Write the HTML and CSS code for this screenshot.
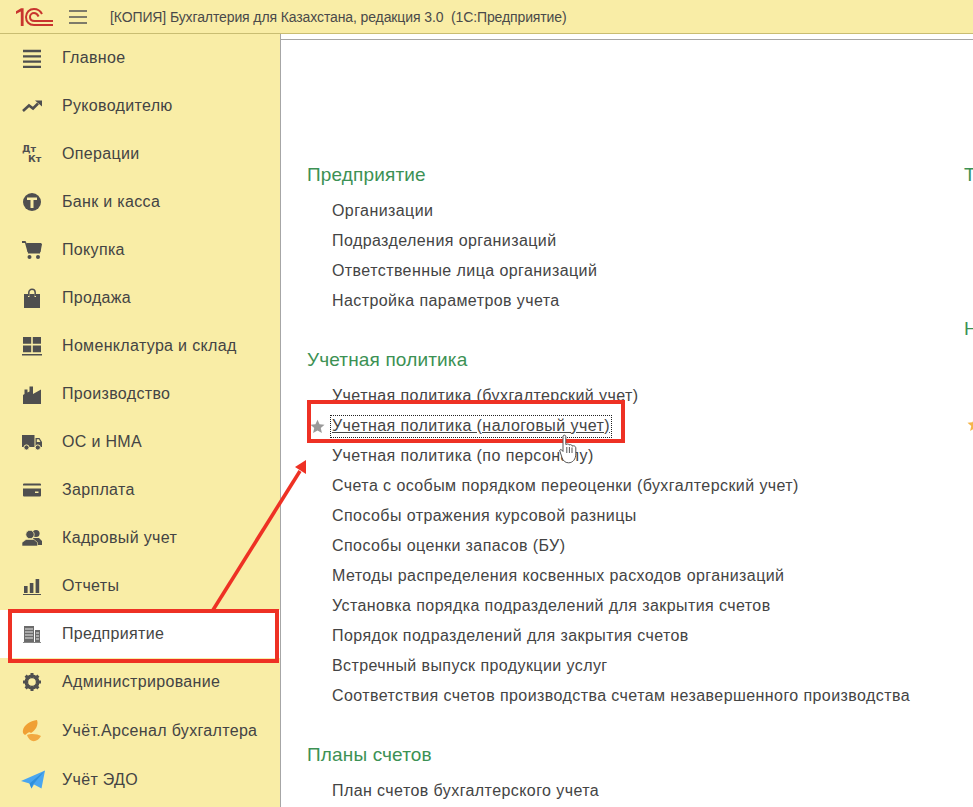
FILE: index.html
```html
<!DOCTYPE html>
<html lang="ru">
<head>
<meta charset="utf-8">
<title>Бухгалтерия для Казахстана</title>
<link rel="stylesheet" href="styles.css">
</head>
<body>
<div class="app">
  <header class="topbar">
    <svg class="logo" viewBox="0 0 37 18" width="37" height="18">
      <path d="M0 3.2L5 .2H7.6V18H4.8V3.6L0 6Z" fill="#c8342e"/>
      <path d="M37 17H18C13 17 10 13.5 10 9C10 4.2 13.5 1 18 1C22 1 24.5 3.2 26 6" fill="none" stroke="#c8342e" stroke-width="2"/>
      <path d="M37 13H18.5C15.5 13 14 11.2 14 9C14 6.6 15.8 5 18 5C20.5 5 21.6 6.4 22.6 8.5" fill="none" stroke="#c8342e" stroke-width="2"/>
    </svg>
    <svg class="burger" viewBox="0 0 18 14" width="18" height="14"><path d="M0 1H18M0 7H18M0 13H18" stroke="#555" stroke-width="1.4"/></svg>
    <span class="title">[КОПИЯ] Бухгалтерия для Казахстана, редакция 3.0&nbsp; (1С:Предприятие)</span>
  </header>
  <div class="body">
    <nav class="side">
      <a class="nav-item"><svg class="ico" viewBox="0 0 20 20"><path d="M1 1.8H19V4.2H1ZM1 7.2H19V9.6H1ZM1 12.4H19V14.8H1ZM1 17.8H19V20H1Z" fill="#4f4f4f"/></svg><span>Главное</span></a>
      <a class="nav-item"><svg class="ico" viewBox="0 0 20 20"><path d="M1 15 L7 9.5 L11 12.5 L16 7.5" fill="none" stroke="#4f4f4f" stroke-width="2.6"/><path d="M13 4.5 H20 V10.5Z" fill="#4f4f4f"/></svg><span>Руководителю</span></a>
      <a class="nav-item"><span class="ico dk"><b>Дт</b><b class="kt">Кт</b></span><span>Операции</span></a>
      <a class="nav-item"><svg class="ico" viewBox="0 0 20 20"><circle cx="10" cy="10" r="9" fill="#4f4f4f"/><path d="M5 5.5H15V8H11.5V16H8.5V8H5Z" fill="#f9eda6"/></svg><span>Банк и касса</span></a>
      <a class="nav-item"><svg class="ico" viewBox="0 0 20 20"><path d="M0 1H3.5L5 4H20L18.5 12H5.5L3 3H0Z" fill="#4f4f4f"/><path d="M4.5 3H19.5L18 13.5H6Z" fill="#4f4f4f"/><circle cx="7.5" cy="17" r="2" fill="#4f4f4f"/><circle cx="16" cy="17" r="2" fill="#4f4f4f"/></svg><span>Покупка</span></a>
      <a class="nav-item"><svg class="ico" viewBox="0 0 20 20"><path d="M2 6H6V9H7.5V6H12.5V9H14V6H18V20H2Z" fill="#4f4f4f"/><path d="M6.8 8V4.5A3.2 3.2 0 0 1 13.2 4.5V8" fill="none" stroke="#4f4f4f" stroke-width="1.5"/></svg><span>Продажа</span></a>
      <a class="nav-item"><svg class="ico" viewBox="0 0 20 20"><path d="M1 1H9.2V7.8H1ZM10.8 1H19V7.8H10.8ZM1 9.4H9.2V16.2H1ZM10.8 9.4H19V16.2H10.8ZM0 18H20V19.5H0Z" fill="#4f4f4f"/></svg><span>Номенклатура и склад</span></a>
      <a class="nav-item"><svg class="ico" viewBox="0 0 20 20"><path d="M1 20V11L2.5 10V5.5H5.5V8.5L7.5 7.5V2.5H11V10L19 5.5V20Z" fill="#4f4f4f"/></svg><span>Производство</span></a>
      <a class="nav-item"><svg class="ico" viewBox="0 0 20 20"><path d="M0 3H12.5V15H0ZM13.5 6H17.5L20 10V15H13.5Z" fill="#4f4f4f"/><path d="M14.8 7.2H17L18.4 10H14.8Z" fill="#f9eda6"/><circle cx="4.5" cy="15.5" r="2.6" fill="#4f4f4f" stroke="#f9eda6" stroke-width="1"/><circle cx="15.8" cy="15.5" r="2.6" fill="#4f4f4f" stroke="#f9eda6" stroke-width="1"/></svg><span>ОС и НМА</span></a>
      <a class="nav-item"><svg class="ico" viewBox="0 0 20 20"><path d="M2 3.5H18A1 1 0 0 1 19 4.5V5.5H1V4.5A1 1 0 0 1 2 3.5ZM1 8.5H19V15.5A1 1 0 0 1 18 16.5H2A1 1 0 0 1 1 15.5ZM13 11.5V13H16.5V11.5Z" fill="#4f4f4f" fill-rule="evenodd"/></svg><span>Зарплата</span></a>
      <a class="nav-item"><svg class="ico" viewBox="0 0 20 20"><circle cx="14" cy="5.5" r="3.6" fill="#4f4f4f"/><path d="M11 10H17L20 13V17H14Z" fill="#4f4f4f"/><circle cx="8" cy="6.5" r="4.2" fill="#4f4f4f" stroke="#f9eda6" stroke-width=".8"/><path d="M0 18V14.5L4 11.5H12L15.5 14.5V18Z" fill="#4f4f4f" stroke="#f9eda6" stroke-width=".6"/></svg><span>Кадровый учет</span></a>
      <a class="nav-item"><svg class="ico" viewBox="0 0 20 20"><path d="M2 10H5.6V17H2ZM7.8 7H11.4V17H7.8ZM13.6 3H17.2V17H13.6ZM1 18H19V19H1Z" fill="#4f4f4f"/></svg><span>Отчеты</span></a>
      <a class="nav-item active"><svg class="ico" viewBox="0 0 20 20"><path d="M2 2H12V18H2ZM13 6H18V18H13Z" fill="#6b6b6b"/><path d="M3 5H11M3 8H11M3 11H11M3 14H11M14 9H17M14 12H17M14 15H17" stroke="#e8e8e8" stroke-width="1"/><path d="M1 18.5H19" stroke="#888" stroke-width="1"/></svg><span>Предприятие</span></a>
      <a class="nav-item"><svg class="ico" viewBox="0 0 20 20"><circle cx="10" cy="10" r="6" fill="none" stroke="#4f4f4f" stroke-width="3"/><path d="M10 1V19M1 10H19M3.6 3.6L16.4 16.4M16.4 3.6L3.6 16.4" stroke="#4f4f4f" stroke-width="3"/><circle cx="10" cy="10" r="3.8" fill="#f9eda6"/></svg><span>Администрирование</span></a>
      <a class="nav-item tall"><svg class="ico leaf" viewBox="0 0 20 24"><path d="M1 10C2 5 8 1 15 0C17 5 13 11 9 13C7 11 5 14 3 15C1 14 .5 12 1 10Z" fill="#f0a034"/><path d="M5 15C9 13 16 14 19 16C16 22 8 24 5 15Z" fill="#f2a941"/></svg><span>Учёт.Арсенал бухгалтера</span></a>
      <a class="nav-item tall"><svg class="ico plane" viewBox="0 0 24 19"><path d="M0 11L24 .5L20.5 18.5L13 14.5L10.5 18.5L8.5 13.5Z" fill="#4aa6f0"/><path d="M8.5 13.5L24 .5L12 14.5L10.5 18.5Z" fill="#2f8fdc"/></svg><span>Учёт ЭДО</span></a>
    </nav>
    <main class="content">
      <div class="columns">
        <div class="col col-main">
          <section class="group">
            <h2>Предприятие</h2>
            <a class="link">Организации</a>
            <a class="link">Подразделения организаций</a>
            <a class="link">Ответственные лица организаций</a>
            <a class="link">Настройка параметров учета</a>
          </section>
          <section class="group">
            <h2>Учетная политика</h2>
            <a class="link">Учетная политика (бухгалтерский учет)</a>
            <a class="link current"><svg class="star" viewBox="0 0 16 16" width="15" height="15"><path d="M8 .8L10.2 5.7L15.5 6.2L11.5 9.7L12.7 15L8 12.2L3.3 15L4.5 9.7L.5 6.2L5.8 5.7Z" fill="#9a9a9a"/></svg><span class="focus">Учетная политика (налоговый учет)</span></a>
            <a class="link">Учетная политика (по персоналу)</a>
            <a class="link">Счета с особым порядком переоценки (бухгалтерский учет)</a>
            <a class="link">Способы отражения курсовой разницы</a>
            <a class="link">Способы оценки запасов (БУ)</a>
            <a class="link">Методы распределения косвенных расходов организаций</a>
            <a class="link">Установка порядка подразделений для закрытия счетов</a>
            <a class="link">Порядок подразделений для закрытия счетов</a>
            <a class="link">Встречный выпуск продукции услуг</a>
            <a class="link">Соответствия счетов производства счетам незавершенного производства</a>
          </section>
          <section class="group">
            <h2>Планы счетов</h2>
            <a class="link">План счетов бухгалтерского учета</a>
          </section>
        </div>
        <div class="col col-next">
          <section class="group group-t"><h2>Т</h2></section>
          <section class="group"><h2>Н</h2>
            <svg class="fav" viewBox="0 0 16 16" width="15" height="15"><path d="M8 .8L10.2 5.7L15.5 6.2L11.5 9.7L12.7 15L8 12.2L3.3 15L4.5 9.7L.5 6.2L5.8 5.7Z" fill="#f5b54a"/></svg>
          </section>
        </div>
      </div>
    </main>
  </div>
  <div class="mark mark-side"></div>
  <div class="mark mark-link"></div>
  <svg class="arrow" viewBox="0 0 973 807" width="973" height="807">
    <path d="M213 610L300 471" stroke="#ee3124" stroke-width="3.6" fill="none"/>
    <path d="M306 460L295 467L306 474Z" fill="#ee3124"/>
  </svg>
  <svg class="hand" viewBox="0 0 21 30" width="21" height="30">
    <path d="M5 2C6 .6 7.8 1 7.8 2.6V10.5L9.5 10C10.5 9.8 11 10.5 11 11L12.5 10.6C13.5 10.6 14 11.3 14 12L15.5 11.8C17 11.8 17.8 13 17.8 14V20C17.8 25 15 28.8 10.5 28.8C7 28.8 5 26.5 4 23.5L1.8 17C1.4 15.5 3 15 3.8 16L5 17.5Z" fill="#fff" stroke="#555" stroke-width="1"/>
    <path d="M8.8 13V19M11.4 13V19M14 13.5V19" stroke="#555" stroke-width="1"/>
  </svg>
</div>
</body>
</html>
```

FILE: styles.css
```css
* { box-sizing: border-box; }
html, body { margin: 0; padding: 0; height: 100%; }
body { font-family: "Liberation Sans", Arial, sans-serif; background: #fff; overflow: hidden; }
.app { position: relative; width: 973px; height: 807px; overflow: hidden; display: flex; flex-direction: column; }
.topbar { flex: 0 0 34px; height: 34px; background: #f9eda6; border-bottom: 1px solid #c9bd72; display: flex; align-items: center; padding-left: 16px; }
.logo { flex: none; }
.burger { flex: none; margin-left: 16px; }
.title { margin-left: 23px; font-size: 14px; letter-spacing: -0.11px; color: #4a4a4a; white-space: nowrap; }
.body { flex: 1; display: flex; min-height: 0; }
.side { flex: 0 0 281px; background: #f9eda6; border-right: 1px solid #a6a6a6; padding: 0; display: flex; flex-direction: column; }
.nav-item { flex: 0 0 48px; height: 48px; display: flex; align-items: center; padding-left: 22px; font-size: 16px; letter-spacing: .33px; color: #444; white-space: nowrap; }
.nav-item.tall { flex-basis: 49px; height: 49px; }
.nav-item.active { background: #fff; }
.ico { flex: none; width: 20px; height: 20px; margin-right: 20px; }
.ico.leaf { width: 20px; height: 24px; margin-top: 2px; }
.ico.plane { width: 24px; height: 19px; margin-left: -1px; margin-right: 17px; }
.dk { display: flex; flex-direction: column; font-family: "DejaVu Sans", sans-serif; font-size: 9.5px; line-height: 9.5px; letter-spacing: 0; color: #4f4f4f; }
.dk b { display: block; }
.dk .kt { margin-left: 6px; }
.content { flex: 1; min-width: 0; border-top: 1px solid #a6a6a6; margin-top: 5px; overflow: hidden; padding: 123px 0 0 26px; }
.columns { display: flex; }
.col-main { flex: 0 0 657px; }
.col-next { flex: 0 0 60px; }
.group { display: flex; flex-direction: column; margin-bottom: 32px; }
.group h2 { margin: 0 0 9px; font-size: 19px; line-height: 24px; letter-spacing: .15px; font-weight: 400; color: #3c9154; }
.group-t { margin-bottom: 121px; }
.link { position: relative; display: flex; align-items: center; height: 30px; padding-left: 25px; font-size: 16px; letter-spacing: .42px; color: #444; white-space: nowrap; }
.star { position: absolute; left: 3px; top: 8px; }
.focus { height: 23px; line-height: 22px; margin-left: -2px; padding: 0 2px; outline: 1px dotted #222; outline-offset: -1px; text-decoration: underline; }
.fav { margin: 67px 0 0 3px; }
.mark { position: absolute; border: 4px solid #ee3124; }
.mark-side { left: 8px; top: 609px; width: 271px; height: 54px; }
.mark-link { left: 307px; top: 400px; width: 318px; height: 43px; }
.arrow { position: absolute; left: 0; top: 0; pointer-events: none; }
.hand { position: absolute; left: 558px; top: 434px; }
```
